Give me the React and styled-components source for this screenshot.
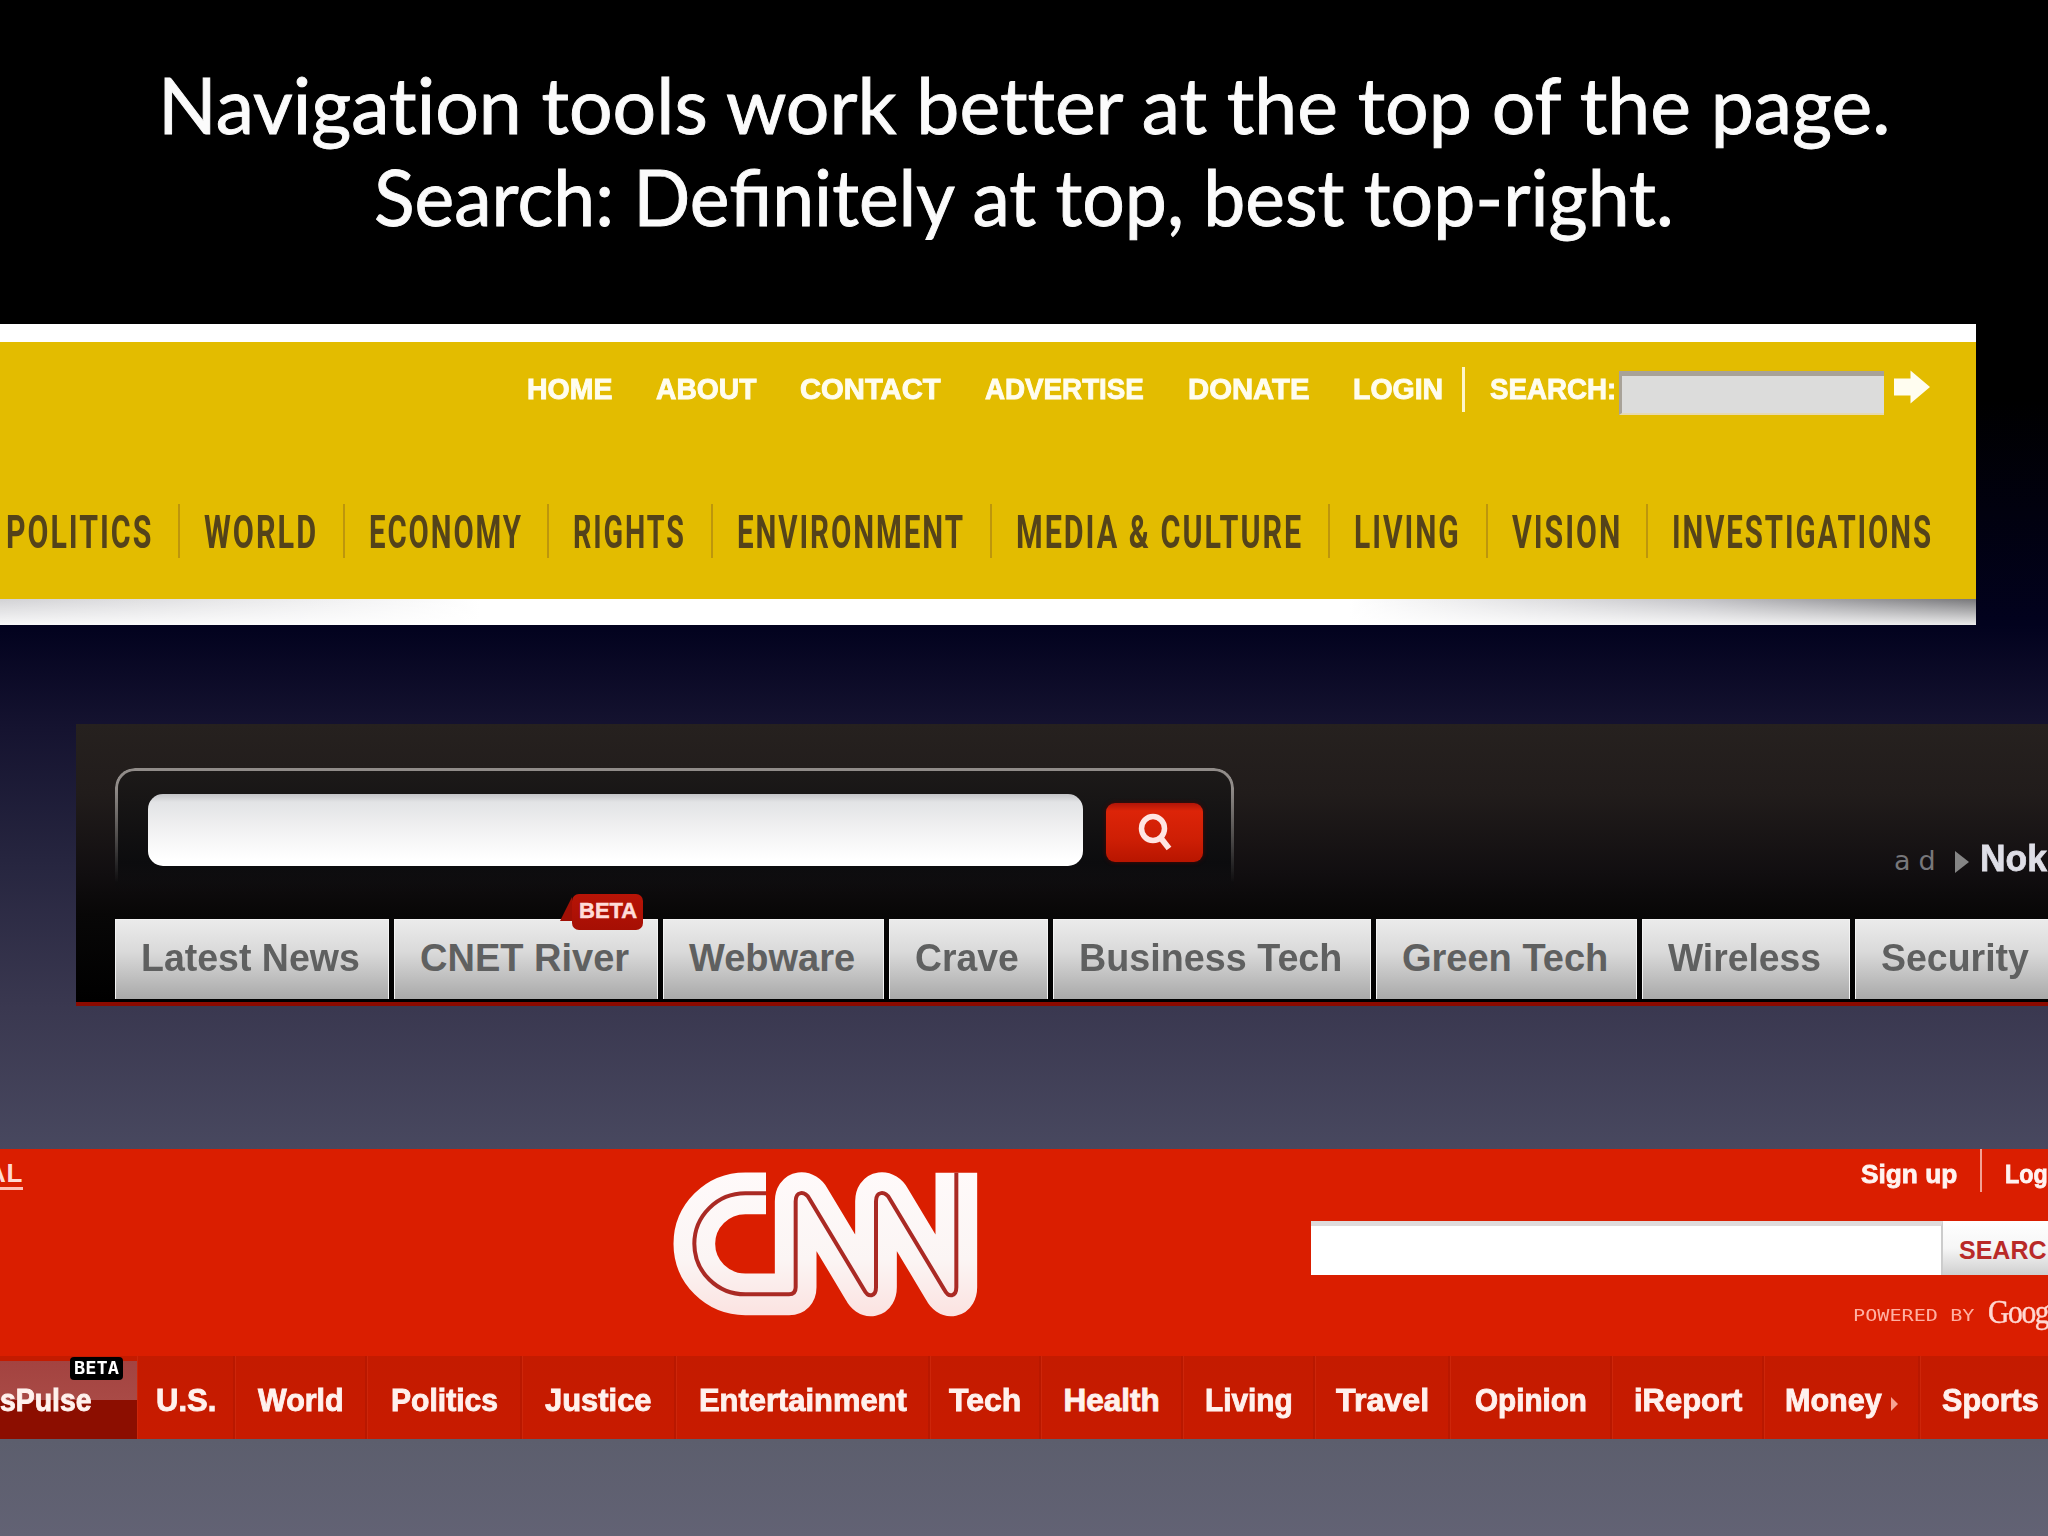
import React, { useLayoutEffect, useRef, useState } from "react";
import styled, { createGlobalStyle } from "styled-components";

const COLORS = {
  yellow: "#e3bc00",
  brown: "#54431a",
  red: "#da1e00",
  navRed: "#c41b00",
  tabText: "#5f6060",
};

const GlobalStyle = createGlobalStyle`
  * { box-sizing: border-box; }
  html, body { margin: 0; background: #000; }
`;

/* Label stretched to an exact width */

const FitBox = styled.span`
  display: block;
  flex: none;
  width: ${({ $width }) => $width}px;
  white-space: nowrap;
`;

const FitInner = styled.span`
  display: inline-block;
  transform-origin: 0 50%;
`;

const Fit = ({ width, children }) => {
  const ref = useRef(null);
  const [scale, setScale] = useState(1);

  useLayoutEffect(() => {
    setScale(width / ref.current.offsetWidth);
  }, [width]);

  return (
    <FitBox $width={width}>
      <FitInner ref={ref} style={{ transform: `scaleX(${scale})` }}>
        {children}
      </FitInner>
    </FitBox>
  );
};

const Slide = styled.main`
  display: flex;
  flex-direction: column;
  width: 2048px;
  height: 1536px;
  overflow: hidden;
  font-family: "Liberation Sans", Arial, sans-serif;
  background: linear-gradient(
    #000 0,
    #000 400px,
    #02021e 625px,
    #14122f 722px,
    #26253f 860px,
    #3a3850 1008px,
    #48485f 1148px,
    #5c5e6d 1440px,
    #626274 1536px
  );
`;

const Title = styled.h1`
  display: flex;
  flex-direction: column;
  align-items: center;
  height: 324px;
  flex: none;
  margin: 0;
  padding-top: 58px;
  color: #fbfbfb;
  font: 400 77px/92px Lato, sans-serif;
  -webkit-text-stroke: 0.9px #fbfbfb;
`;

const TitleLine = styled.span`
  font-variant-ligatures: ${({ $ligatures }) => ($ligatures ? "normal" : "none")};
`;

/* Yellow header */

const YellowFrame = styled.section`
  display: flex;
  flex-direction: column;
  flex: none;
  width: 1976px;
  height: 301px;
  padding-top: 18px;
  overflow: hidden;
  background: #fff;
`;

const YellowBody = styled.div`
  height: 257px;
  padding-top: 22px;
  background: ${COLORS.yellow};
`;

const YellowShadow = styled.div`
  flex: 1;
  background:
    linear-gradient(transparent, rgba(255, 255, 255, 0.85)),
    linear-gradient(90deg, #d2d2d5 0, #fff 480px, #fff 1350px, #c4c4c8 1700px, #77777a 1976px);
`;

const UtilityRow = styled.div`
  display: flex;
  align-items: center;
  height: 50px;
  padding-left: 527px;
  color: #fffdee;
  font-weight: 700;
  font-size: 28.8px;
  line-height: 50px;
  -webkit-text-stroke: 0.9px #fffdee;
`;

const UtilityLinks = styled.div`
  display: flex;
  gap: 44px;
`;

const UtilityDivider = styled.span`
  width: 3px;
  height: 45px;
  margin: 0 25px 0 19px;
  background: #fff6c8;
`;

const UtilityInput = styled.div`
  width: 265px;
  height: 44px;
  margin: 7px 10px 0 3px;
  background: #dcdcdb;
  border: solid #a8a298;
  border-width: 5px 0 0 3px;
  border-bottom: 2px solid #e6d9b0;
`;

const GoArrow = styled.svg`
  flex: none;
  margin-bottom: 5px;
`;

const SectionRow = styled.nav`
  display: flex;
  height: 54px;
  margin-top: 90px;
  padding-left: 6px;
  color: ${COLORS.brown};
  font: 700 46px/57px Roboto, sans-serif;
  letter-spacing: 3px;
`;

const SectionItem = styled.span`
  flex: none;
  padding: 0 24.8px 0 24px;
  border-right: 2px solid #bd960c;

  &:first-child {
    padding-left: 0;
  }

  &:last-child {
    border-right: 0;
  }
`;

/* Dark header with tabs */

const DarkFrame = styled.section`
  display: flex;
  flex-direction: column;
  flex: none;
  height: 282px;
  margin: 99px 0 0 76px;
  padding: 44px 0 0 39px;
  border-bottom: 4px solid #8c0a00;
  background: linear-gradient(#26211f 0, #211c1b 70px, #110e10 150px, #080707 190px, #000 277px);
`;

const DarkTop = styled.div`
  display: flex;
  flex: none;
  justify-content: space-between;
  height: 151px;
`;

const SearchFrame = styled.div`
  position: relative;
  display: flex;
  width: 1119px;
  height: 125px;
  padding: 26px 0 0 33px;
  border-radius: 20px 20px 0 0;
  background: linear-gradient(#1d1a19, #0c0c0e 95px, transparent);

  &::before {
    content: "";
    position: absolute;
    inset: 0;
    border: 3px solid #918c89;
    border-bottom: 0;
    border-radius: 20px 20px 0 0;
    mask-image: linear-gradient(#000 0, #000 20px, transparent 115px);
  }
`;

const SearchInput = styled.div`
  width: 935px;
  height: 72px;
  border-radius: 15px;
  background: linear-gradient(#c3c4c7 0, #e2e3e5 8px, #f1f1f2 35px, #fff 65px);
`;

const SearchButton = styled.div`
  display: flex;
  align-items: center;
  justify-content: center;
  width: 97px;
  height: 59px;
  margin: 9px 0 0 23px;
  border-radius: 9px;
  background: linear-gradient(#b01508 0, #dc2408 8px, #cf1f05 35px, #b81500);
  box-shadow: 0 0 4px #500500;
`;

const AdLine = styled.div`
  display: flex;
  align-items: center;
  width: 154px;
  height: 40px;
  margin-top: 71px;
`;

const AdLabel = styled.span`
  width: 61px;
  padding-top: 3px;
  color: #77777a;
  font: 27px/40px "DejaVu Sans", sans-serif;
  letter-spacing: 8px;
`;

const AdArrow = styled.span`
  margin: 6px 11px 0 0;
  border: 11px solid transparent;
  border-width: 11px 0 11px 14px;
  border-left-color: #858585;
`;

const AdName = styled.b`
  color: #dedee6;
  font-size: 37px;
  line-height: 40px;
  -webkit-text-stroke: 0.8px #dedee6;
`;

const Tabs = styled.nav`
  display: flex;
  gap: 5px;
  height: 80px;
`;

const Tab = styled.span`
  position: relative;
  flex: none;
  padding: 0 28px 0 25px;
  border: solid #f3f3f3;
  border-width: 1px 1px 0;
  background: linear-gradient(#ebebeb, #dadada 40%, #a9a9a9);
  color: ${COLORS.tabText};
  font: 700 38px/77px "Liberation Sans", Arial, sans-serif;
`;

const RedBadge = styled.span`
  position: absolute;
  top: -26px;
  right: 14px;
  width: 71px;
  height: 36px;
  padding-left: 7px;
  border-radius: 7px;
  background: linear-gradient(#b81406, #a60f04);
  color: #ffdcd8;
  font-size: 22px;
  line-height: 33px;
  -webkit-text-stroke: 0.5px #ffdcd8;

  &::before {
    content: "";
    position: absolute;
    left: -12px;
    top: 3px;
    border-left: 12px solid transparent;
    border-bottom: 24px solid #a01005;
  }
`;

/* Red header */

const RedFrame = styled.section`
  display: flex;
  flex-direction: column;
  flex: none;
  height: 290px;
  margin-top: 143px;
  overflow: hidden;
  background: ${COLORS.red};
`;

const RedTop = styled.div`
  display: flex;
  flex: none;
  height: 207px;
`;

const Edition = styled.div`
  width: 673px;
  padding-top: 10px;
  color: #ffd9d2;
  font-weight: 700;
  font-size: 26px;
  line-height: 29px;

  span {
    display: inline-block;
    margin-left: -13px;
    border-bottom: 3px solid #ffc0b6;
    line-height: 28px;
    letter-spacing: 0.6px;
  }
`;

const LogoBox = styled.div`
  width: 638px;
  padding-top: 23px;
`;

const RedTools = styled.div`
  display: flex;
  flex-direction: column;
  width: 737px;
`;

const Account = styled.div`
  display: flex;
  justify-content: flex-start;
  height: 43px;
  padding-left: 550px;
  color: #fff3f0;
  font-weight: 700;
  font-size: 26px;
  line-height: 50px;
  white-space: nowrap;
  -webkit-text-stroke: 0.8px #fff3f0;
`;

const AccountDivider = styled.span`
  flex: none;
  width: 2px;
  margin: 0 23px 0 23px;
  background: #f3a193;
`;

const RedSearch = styled.div`
  display: flex;
  height: 54px;
  margin-top: 29px;
`;

const RedInput = styled.div`
  flex: none;
  width: 632px;
  border-top: 5px solid #dedbdb;
  border-right: 2px solid #ccc;
  background: #fff;
`;

const RedButton = styled.div`
  width: 105px;
  padding-left: 16px;
  background: linear-gradient(#fff, #f6f6f6 50%, #cfcfcf);
  color: #b92a28;
  font-weight: 700;
  font-size: 25px;
  line-height: 59px;
`;

const Powered = styled.div`
  display: flex;
  align-items: baseline;
  height: 55px;
  padding: 14px 0 0 542px;
  color: #ffb0a2;
  font: 16.5px/38px "DejaVu Sans Mono", monospace;
`;

const Google = styled.span`
  margin-left: 14px;
  padding-top: 2px;
  color: #ffd8d1;
  font: 33px/38px "Liberation Serif", serif;
  letter-spacing: -1.5px;
  transform: translateY(2px);
  -webkit-text-stroke: 0.4px #ffd8d1;
`;

const RedNav = styled.nav`
  display: flex;
  height: 83px;
  background: linear-gradient(${COLORS.navRed}, #c81b00);
  color: #fff1ed;
  font-weight: 700;
  font-size: 31.5px;
  line-height: 78px;
  -webkit-text-stroke: 0.9px #fff1ed;
`;

const RedItem = styled.span`
  display: flex;
  flex: none;
  align-items: center;
  justify-content: center;
  width: ${({ $width }) => $width}px;
  padding: 5px 0 0 1px;
  border-right: 2px solid #b91800;
  box-shadow: inset 1px 0 #cd260a;
`;

const PulseItem = styled.span`
  position: relative;
  flex: none;
  width: 137px;
  border-top: 5px solid ${COLORS.navRed};
  background: linear-gradient(#a34340 0, #a94a46 39px, #8c0e00 39px);
`;

const BlackBadge = styled.span`
  position: absolute;
  top: -4px;
  right: 14px;
  width: 53px;
  height: 23px;
  padding-left: 4px;
  border-radius: 4px;
  background: #000;
  color: #fff;
  font: 700 17px/22px "DejaVu Sans Mono", monospace;
  -webkit-text-stroke: 0;
`;

const MoneyArrow = styled.span`
  margin: 8px 0 0 9px;
  border: 7px solid transparent;
  border-width: 7px 0 7px 7px;
  border-left-color: #f6a394;
`;

const utilityLinks = [
  ["HOME", 85],
  ["ABOUT", 100],
  ["CONTACT", 141],
  ["ADVERTISE", 159],
  ["DONATE", 121],
  ["LOGIN", 90],
];

const sections = [
  ["POLITICS", 147],
  ["WORLD", 114],
  ["ECONOMY", 154],
  ["RIGHTS", 113],
  ["ENVIRONMENT", 228],
  ["MEDIA & CULTURE", 287],
  ["LIVING", 107],
  ["VISION", 110],
  ["INVESTIGATIONS", 261],
];

const tabs = [
  ["Latest News", 219],
  ["CNET River", 209],
  ["Webware", 166],
  ["Crave", 104],
  ["Business Tech", 263],
  ["Green Tech", 206],
  ["Wireless", 153],
  ["Security", 148],
];

// label, cell width, text width
const redItems = [
  ["U.S.", 98, 60],
  ["World", 132, 86],
  ["Politics", 155, 107],
  ["Justice", 154, 107],
  ["Entertainment", 254, 208],
  ["Tech", 111, 72],
  ["Health", 142, 96],
  ["Living", 132, 88],
  ["Travel", 135, 93],
  ["Opinion", 162, 112],
  ["iReport", 152, 108],
  ["Money", 156, 97],
  ["Sports", 141, 97],
];

const ArrowIcon = () => (
  <GoArrow width="36" height="34" viewBox="0 0 36 34">
    <path d="M0 8.500h16.500V0.500L36 17 16.500 33.500v-8H0z" fill="#fffdf0" />
  </GoArrow>
);

const SearchIcon = () => (
  <svg width="38" height="40" viewBox="0 0 38 40" fill="none" stroke="#ffe5e2">
    <ellipse cx="17" cy="15.500" rx="11.500" ry="12" strokeWidth="5.500" />
    <path d="M24 24l9 11.500" strokeWidth="6" />
  </svg>
);

const LOGO_LINE =
  "M378 158H316A153 151.500 0 0 0 316 461H447Q467 461 467 440V182C467 151 494 150 508 174L672 447C685 473 708 468 708 440V182C708 151 735 150 749 174L913 447C926 473 949 468 949 440V96";

const CnnLogo = () => (
  <svg width="306" height="146" viewBox="99 94 918 438" fill="none">
    <defs>
      <linearGradient id="logo" gradientUnits="userSpaceOnUse" x1="0" y1="95" x2="0" y2="530">
        <stop offset="0" stopColor="#fffafa" />
        <stop offset="0.6" stopColor="#fbf5f4" />
        <stop offset="1" stopColor="#fbe2e0" />
      </linearGradient>
    </defs>
    <path d={LOGO_LINE} stroke="url(#logo)" strokeWidth="125" strokeLinejoin="round" />
    <path d={LOGO_LINE} stroke="#aa2a24" strokeWidth="12" />
  </svg>
);

const App = () => (
  <>
    <GlobalStyle />
    <Slide>
      <Title>
        <TitleLine>
          <Fit width={1732}>Navigation tools work better at the top of the page.</Fit>
        </TitleLine>
        <TitleLine $ligatures>
          <Fit width={1300}>Search: Definitely at top, best top-right.</Fit>
        </TitleLine>
      </Title>

      <YellowFrame>
        <YellowBody>
          <UtilityRow>
            <UtilityLinks>
              {utilityLinks.map(([label, width]) => (
                <Fit key={label} width={width}>{label}</Fit>
              ))}
            </UtilityLinks>
            <UtilityDivider />
            <Fit width={126}>SEARCH:</Fit>
            <UtilityInput />
            <ArrowIcon />
          </UtilityRow>
          <SectionRow>
            {sections.map(([label, width]) => (
              <SectionItem key={label}>
                <Fit width={width}>{label}</Fit>
              </SectionItem>
            ))}
          </SectionRow>
        </YellowBody>
        <YellowShadow />
      </YellowFrame>

      <DarkFrame>
        <DarkTop>
          <SearchFrame>
            <SearchInput />
            <SearchButton>
              <SearchIcon />
            </SearchButton>
          </SearchFrame>
          <AdLine>
            <AdLabel>ad</AdLabel>
            <AdArrow />
            <AdName>
              <Fit width={67}>Nok</Fit>
            </AdName>
          </AdLine>
        </DarkTop>
        <Tabs>
          {tabs.map(([label, width]) => (
            <Tab key={label}>
              <Fit width={width}>{label}</Fit>
              {label === "CNET River" && (
                <RedBadge>
                  <Fit width={58}>BETA</Fit>
                </RedBadge>
              )}
            </Tab>
          ))}
        </Tabs>
      </DarkFrame>

      <RedFrame>
        <RedTop>
          <Edition>
            <span>AL</span>
          </Edition>
          <LogoBox>
            <CnnLogo />
          </LogoBox>
          <RedTools>
            <Account>
              <Fit width={96}>Sign up</Fit>
              <AccountDivider />
              <Fit width={43}>Log</Fit>
            </Account>
            <RedSearch>
              <RedInput />
              <RedButton>SEARC</RedButton>
            </RedSearch>
            <Powered>
              <Fit width={121}>POWERED BY</Fit>
              <Google>
                <Fit width={60}>Goog</Fit>
              </Google>
            </Powered>
          </RedTools>
        </RedTop>
        <RedNav>
          <PulseItem>
            <Fit width={92}>sPulse</Fit>
            <BlackBadge>
              <Fit width={45}>BETA</Fit>
            </BlackBadge>
          </PulseItem>
          {redItems.map(([label, cell, width]) => (
            <RedItem key={label} $width={cell}>
              <Fit width={width}>{label}</Fit>
              {label === "Money" && <MoneyArrow />}
            </RedItem>
          ))}
        </RedNav>
      </RedFrame>
    </Slide>
  </>
);

export default App;
